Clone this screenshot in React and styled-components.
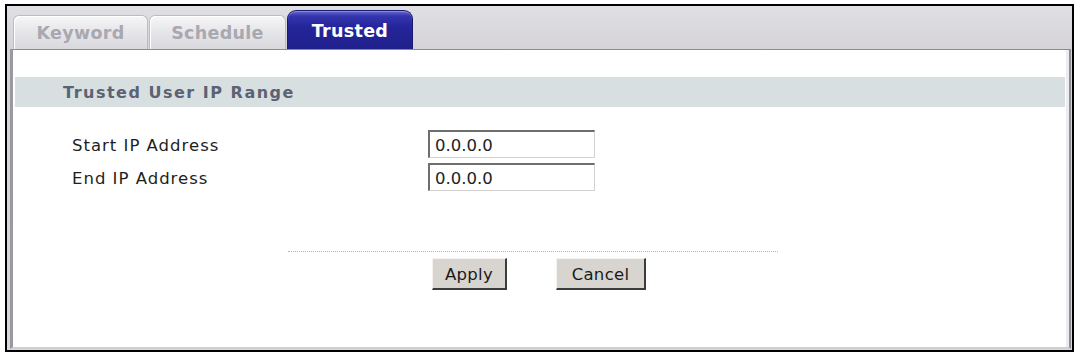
import React, {useState} from "react";
import styled, {createGlobalStyle} from "styled-components";

const GlobalStyle = createGlobalStyle`
    html, body {
        margin: 0;
        padding: 0;
        background: #ffffff;
        font-family: "DejaVu Sans", Verdana, sans-serif;
    }
`;

const Frame = styled.div`
    box-sizing: border-box;
    margin: 4px 0 0 5px;
    width: 1069px;
    height: 348px;
    border: 2px solid #000000;
    background: linear-gradient(#e0dfe3, #d6d4d9 40px, #d9d8dc);
    display: flex;
    flex-direction: column;
`;

const TabBar = styled.div`
    height: 43px;
    display: flex;
    align-items: flex-end;
    gap: 1px;
    padding-left: 6px;
    flex-shrink: 0;
`;

const Tab = styled.div`
    box-sizing: border-box;
    width: ${props => props.width}px;
    height: ${props => props.active ? 39 : 34}px;
    display: flex;
    align-items: center;
    justify-content: center;
    padding-top: ${props => props.active ? 2 : 0}px;
    font-weight: bold;
    font-size: 17.5px;
    letter-spacing: 0.3px;
    border-radius: ${props => props.active ? "9px 9px 0 0" : "6px 6px 0 0"};
    border: 1px solid ${props => props.active ? "#1a1a6e" : "#bdbcc4"};
    border-bottom: none;
    color: ${props => props.active ? "#ffffff" : "#a9a8b1"};
    background: ${props => props.active
        ? "linear-gradient(#6a6ad0 0px, #3434ae 5px, #25259a 16px, #1f1f8c 100%)"
        : "linear-gradient(#f6f6f8 0px, #e8e8eb 14px, #d9d8dd 100%)"};
    box-shadow: ${props => props.active ? "inset 0 1px 0 #8a8ae0" : "inset 1px 1px 0 #ffffff"};
    cursor: pointer;
`;

const Panel = styled.div`
    flex: 1;
    margin: 0 1px 1px 3px;
    background: #ffffff;
    border-top: 1px solid #8c8b93;
    border-left: 3px solid #9a99a2;
    border-right: 2px solid #8e8d95;
    border-bottom: 2px solid #cfced4;
    box-shadow: inset -3px 0 0 #ececef;
    display: flex;
    flex-direction: column;
`;

const SectionHeader = styled.div`
    margin: 27px 4px 0 2px;
    height: 30px;
    background: #d8dfe1;
    display: flex;
    align-items: center;
    padding-left: 48px;
    font-weight: bold;
    font-size: 16px;
    letter-spacing: 1.5px;
    color: #5b6273;
`;

const Fields = styled.div`
    margin-top: 23px;
    padding-left: 59px;
    display: flex;
    flex-direction: column;
    gap: 5px;
`;

const FieldRow = styled.div`
    display: flex;
    align-items: center;
    height: 28px;
`;

const Label = styled.span`
    width: 356px;
    font-size: 16.5px;
    letter-spacing: 1px;
    color: #1e1e1e;
    padding-top: 3px;
`;

const IpInput = styled.input`
    box-sizing: border-box;
    width: 167px;
    height: 28px;
    margin: 0;
    padding: 2px 0 0 5px;
    font-family: "DejaVu Sans", Verdana, sans-serif;
    font-size: 16.5px;
    color: #222222;
    background: #ffffff;
    border-style: solid;
    border-width: 2px 1px 1px 2px;
    border-color: #6e6e6e #d4d2d0 #d4d2d0 #6e6e6e;
    outline: none;
`;

const Footer = styled.div`
    margin: 60px 0 0 275px;
    width: 490px;
    display: flex;
    flex-direction: column;
`;

const DottedLine = styled.div`
    border-top: 1px dotted #b4b4b8;
`;

const Buttons = styled.div`
    margin-top: 6px;
    padding-left: 12px;
    display: flex;
    justify-content: center;
    gap: 49px;
`;

const Button = styled.button`
    box-sizing: border-box;
    width: ${props => props.width}px;
    height: 32px;
    margin: 0;
    padding: 2px 0 0 0;
    font-family: "DejaVu Sans", Verdana, sans-serif;
    font-size: 16.5px;
    letter-spacing: 0.3px;
    color: #1a1a1a;
    background: #d8d5d0;
    border-style: solid;
    border-width: 1px 2px 2px 1px;
    border-color: #f4f3f1 #3c3c3c #3c3c3c #f4f3f1;
    cursor: pointer;
`;

const tabs = [
    {name: "Keyword", width: 135},
    {name: "Schedule", width: 137},
    {name: "Trusted", width: 126},
];

export default function App() {
    const [activeTab, setActiveTab] = useState("Trusted");
    const [startIp, setStartIp] = useState("0.0.0.0");
    const [endIp, setEndIp] = useState("0.0.0.0");

    return (
        <>
            <GlobalStyle/>
            <Frame>
                <TabBar>
                    {tabs.map(tab => (
                        <Tab
                            key={tab.name}
                            width={tab.width}
                            active={activeTab === tab.name}
                            onClick={() => setActiveTab(tab.name)}
                        >
                            {tab.name}
                        </Tab>
                    ))}
                </TabBar>
                <Panel>
                    <SectionHeader>Trusted User IP Range</SectionHeader>
                    <Fields>
                        <FieldRow>
                            <Label>Start IP Address</Label>
                            <IpInput value={startIp} onChange={(e) => setStartIp(e.target.value)}/>
                        </FieldRow>
                        <FieldRow>
                            <Label>End IP Address</Label>
                            <IpInput value={endIp} onChange={(e) => setEndIp(e.target.value)}/>
                        </FieldRow>
                    </Fields>
                    <Footer>
                        <DottedLine/>
                        <Buttons>
                            <Button width={75}>Apply</Button>
                            <Button width={90}>Cancel</Button>
                        </Buttons>
                    </Footer>
                </Panel>
            </Frame>
        </>
    );
}
